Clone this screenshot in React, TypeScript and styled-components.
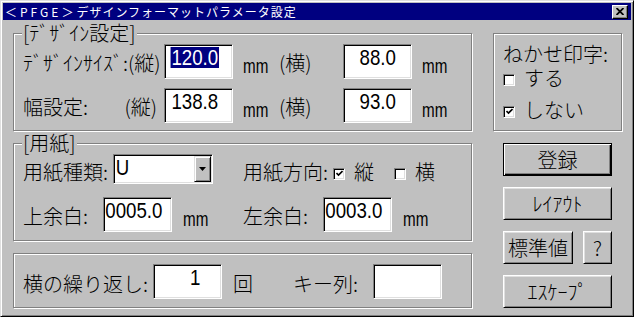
import React from 'react';
import styled, { createGlobalStyle } from 'styled-components';

const GlobalStyle = createGlobalStyle`
  html, body {
    margin: 0;
    padding: 0;
    background: #c0c0c0;
  }
  body {
    width: 634px;
    height: 317px;
    overflow: hidden;
    font-family: "Noto Sans CJK JP", sans-serif;
  }
`;

const Window = styled.div`
  box-sizing: border-box;
  width: 634px;
  height: 317px;
  background: #c0c0c0;
  border: 1px solid;
  border-color: #dfdfdf #000 #000 #dfdfdf;
  box-shadow: inset 1px 1px 0 #fff, inset -1px -1px 0 #808080;
  padding: 2px;
  display: flex;
  flex-direction: column;
`;

const TitleBar = styled.div`
  height: 17px;
  background: #000080;
  display: flex;
  align-items: center;
  justify-content: space-between;
  padding: 0 3px 0 2px;
`;

const Title = styled.span`
  color: #fff;
  font-size: 12px;
  line-height: 17px;
  letter-spacing: 1px;
  white-space: nowrap;
`;

const Brand = styled.span`
  letter-spacing: 3px;
`;

const CloseButton = styled.div`
  box-sizing: border-box;
  width: 16px;
  height: 14px;
  background: #c0c0c0;
  border: 1px solid;
  border-color: #fff #000 #000 #fff;
  box-shadow: inset -1px -1px 0 #808080;
  display: flex;
  align-items: center;
  justify-content: center;
`;

const Body = styled.div`
  display: flex;
  padding: 13px 0 0 10px;
`;

const LeftColumn = styled.div`
  width: 459px;
  display: flex;
  flex-direction: column;
  gap: 12px;
`;

const RightColumn = styled.div`
  width: 129px;
  margin-left: 21px;
  display: flex;
  flex-direction: column;
`;

const Group = styled.div<{ $height: number; $padTop?: number }>`
  box-sizing: border-box;
  height: ${p => p.$height}px;
  border: 1px solid #808080;
  box-shadow: 1px 1px 0 #fff, inset 1px 1px 0 #fff;
  padding: ${p => p.$padTop ?? 0}px 9px 0 9px;
  display: flex;
  flex-direction: column;
`;

const Legend = styled.div`
  align-self: flex-start;
  margin: -11px 0 0 -1px;
  padding: 0 1px;
  background: #c0c0c0;
  font-size: 20px;
  line-height: 20px;
  font-weight: 300;
  white-space: nowrap;
`;

const Row = styled.div<{ $height?: number; $top?: number }>`
  display: flex;
  align-items: flex-start;
  height: ${p => p.$height ?? 35}px;
  margin-top: ${p => p.$top ?? 0}px;
`;

const GridRow = styled.div<{ $top?: number }>`
  display: grid;
  grid-template-columns: 141px 69px 46px 64px 69px auto;
  align-items: start;
  height: 35px;
  margin-top: ${p => p.$top ?? 0}px;
`;

const Half = styled.div<{ $width?: number }>`
  display: flex;
  align-items: flex-start;
  width: ${p => (p.$width ? `${p.$width}px` : 'auto')};
  height: 100%;
`;

const Label = styled.span<{ $width?: number; $top?: number; $left?: number }>`
  display: block;
  flex: none;
  width: ${p => (p.$width ? `${p.$width}px` : 'auto')};
  margin-top: ${p => p.$top ?? 9}px;
  margin-left: ${p => p.$left ?? 0}px;
  font-size: 20px;
  line-height: 20px;
  font-weight: 300;
  color: #000;
  white-space: nowrap;
`;

const SplitLabel = styled.div`
  display: flex;
  justify-content: space-between;
  padding-right: 7px;
  margin-top: 9px;
  font-size: 20px;
  line-height: 20px;
  font-weight: 300;
  white-space: nowrap;
`;

const Unit = styled.span<{ $left?: number }>`
  display: block;
  flex: none;
  margin: 12px 0 0 ${p => p.$left ?? 10}px;
  font-family: "Liberation Sans", sans-serif;
  font-size: 20px;
  line-height: 20px;
  color: #000;
  transform: scaleX(0.76);
  transform-origin: left center;
`;

const Field = styled.div<{ $pad?: number }>`
  box-sizing: border-box;
  flex: none;
  width: 69px;
  height: 35px;
  background: #fff;
  border: 1px solid;
  border-color: #808080 #fff #fff #808080;
  box-shadow: inset 1px 1px 0 #000, inset -1px -1px 0 #dfdfdf;
  padding: 2px ${p => p.$pad ?? 13}px 0 0;
  display: flex;
  justify-content: flex-end;
  align-items: flex-start;
  font-family: "Liberation Sans", sans-serif;
  font-size: 22px;
  line-height: 22px;
  color: #000;
  white-space: nowrap;
`;

const Digits = styled.span<{ $selected?: boolean }>`
  display: block;
  flex: none;
  transform: scaleX(0.85);
  transform-origin: right center;
  line-height: 21px;
  padding: 0 1px;
  background: ${p => (p.$selected ? '#000080' : 'transparent')};
  color: ${p => (p.$selected ? '#fff' : '#000')};
`;

const Combo = styled.div`
  box-sizing: border-box;
  flex: none;
  width: 100px;
  height: 30px;
  margin-top: 1px;
  background: #fff;
  border: 1px solid;
  border-color: #808080 #fff #fff #808080;
  box-shadow: inset 1px 1px 0 #000, inset -1px -1px 0 #dfdfdf;
  padding: 1px;
  display: flex;
  justify-content: space-between;
  font-family: "Liberation Sans", sans-serif;
  font-size: 22px;
  line-height: 22px;
`;

const ComboValue = styled.span`
  display: inline-block;
  padding: 1px 0 0 1px;
  transform: scaleX(0.85);
  transform-origin: left center;
`;

const DropButton = styled.div`
  box-sizing: border-box;
  width: 17px;
  height: 100%;
  background: #c0c0c0;
  border: 1px solid;
  border-color: #dfdfdf #000 #000 #dfdfdf;
  box-shadow: inset 1px 1px 0 #fff, inset -1px -1px 0 #808080;
  display: flex;
  align-items: center;
  justify-content: center;
`;

const Option = styled.div<{ $left?: number; $top?: number }>`
  display: flex;
  align-items: center;
  gap: 9px;
  margin: ${p => p.$top ?? 9}px 0 0 ${p => p.$left ?? 0}px;
  font-size: 20px;
  line-height: 20px;
  font-weight: 300;
  white-space: nowrap;
`;

const CheckBox = styled.span`
  box-sizing: border-box;
  flex: none;
  width: 12px;
  height: 12px;
  margin-top: 3px;
  background: #fff;
  border: 1px solid;
  border-color: #808080 #fff #fff #808080;
  box-shadow: inset 1px 1px 0 #000, inset -1px -1px 0 #dfdfdf;
  display: flex;
  align-items: center;
  justify-content: center;
`;

const Heading = styled.div`
  margin-top: 10px;
  font-size: 20px;
  line-height: 20px;
  font-weight: 300;
  white-space: nowrap;
`;

const ButtonStack = styled.div`
  display: flex;
  flex-direction: column;
  gap: 11px;
  margin-top: 12px;
  padding-left: 10px;
`;

const ButtonRow = styled.div`
  display: flex;
  gap: 10px;
`;

const Button = styled.div<{ $width?: number; $default?: boolean }>`
  box-sizing: border-box;
  width: ${p => p.$width ?? 109}px;
  height: 33px;
  background: #c0c0c0;
  border: 1px solid;
  border-color: ${p => (p.$default ? '#000' : '#fff #000 #000 #fff')};
  box-shadow: ${p =>
    p.$default
      ? 'inset 1px 1px 0 #fff, inset -1px -1px 0 #000, inset -2px -2px 0 #808080'
      : 'inset 1px 1px 0 #dfdfdf, inset -1px -1px 0 #808080'};
  display: flex;
  align-items: center;
  justify-content: center;
  font-size: 20px;
  line-height: 20px;
  font-weight: 300;
  color: #000;
  white-space: nowrap;
`;

const Check = ({ checked }: { checked?: boolean }) => (
  <CheckBox>
    {checked && (
      <svg width="7" height="7" viewBox="0 0 7 7">
        <path d="M0.5 3 L2.5 5 L6.5 1" stroke="#000" strokeWidth="1.6" fill="none" />
      </svg>
    )}
  </CheckBox>
);

const App: React.FC = () => (
  <>
    <GlobalStyle />
    <Window>
      <TitleBar>
        <Title>
          <Brand>＜PFGE＞</Brand>デザインフォーマットパラメータ設定
        </Title>
        <CloseButton>
          <svg width="8" height="7" viewBox="0 0 8 7">
            <path d="M0.5 0 L7.5 7 M7.5 0 L0.5 7" stroke="#000" strokeWidth="1.8" />
          </svg>
        </CloseButton>
      </TitleBar>
      <Body>
        <LeftColumn>
          <Group $height={98}>
            <Legend>[ﾃﾞｻﾞｲﾝ設定]</Legend>
            <GridRow $top={1}>
              <SplitLabel>
                <span>ﾃﾞｻﾞｲﾝｻｲｽﾞ:</span>
                <span>(縦)</span>
              </SplitLabel>
              <Field>
                <Digits $selected>120.0</Digits>
              </Field>
              <Unit>mm</Unit>
              <Label>(横)</Label>
              <Field $pad={14}>
                <Digits>88.0</Digits>
              </Field>
              <Unit>mm</Unit>
            </GridRow>
            <GridRow $top={9}>
              <SplitLabel>
                <span>幅設定:</span>
                <span>(縦)</span>
              </SplitLabel>
              <Field>
                <Digits>138.8</Digits>
              </Field>
              <Unit>mm</Unit>
              <Label>(横)</Label>
              <Field $pad={14}>
                <Digits>93.0</Digits>
              </Field>
              <Unit>mm</Unit>
            </GridRow>
          </Group>

          <Group $height={98}>
            <Legend>[用紙]</Legend>
            <Row $height={31}>
              <Half $width={220}>
                <Label $width={90} $top={9}>用紙種類:</Label>
                <Combo>
                  <ComboValue>U</ComboValue>
                  <DropButton>
                    <svg width="7" height="4" viewBox="0 0 7 4">
                      <polygon points="0,0 7,0 3.5,4" fill="#000" />
                    </svg>
                  </DropButton>
                </Combo>
              </Half>
              <Half>
                <Label $width={90} $top={9}>用紙方向:</Label>
                <Option>
                  <Check checked />
                  <span>縦</span>
                </Option>
                <Option $left={20}>
                  <Check />
                  <span>横</span>
                </Option>
              </Half>
            </Row>
            <Row $top={13}>
              <Half $width={220}>
                <Label $width={80}>上余白:</Label>
                <Field $pad={8}>
                  <Digits>0005.0</Digits>
                </Field>
                <Unit $left={11}>mm</Unit>
              </Half>
              <Half>
                <Label $width={80}>左余白:</Label>
                <Field $pad={8}>
                  <Digits>0003.0</Digits>
                </Field>
                <Unit $left={11}>mm</Unit>
              </Half>
            </Row>
          </Group>

          <Group $height={55} $padTop={10}>
            <Row>
              <Label $width={130} $top={10}>横の繰り返し:</Label>
              <Field $pad={20}>
                <Digits>1</Digits>
              </Field>
              <Label $left={11} $top={10}>回</Label>
              <Label $left={40} $width={80} $top={10}>キー列:</Label>
              <Field />
            </Row>
          </Group>
        </LeftColumn>

        <RightColumn>
          <Group $height={98}>
            <Heading>ねかせ印字:</Heading>
            <Option $top={4}>
              <Check />
              <span>する</span>
            </Option>
            <Option $top={12}>
              <Check checked />
              <span>しない</span>
            </Option>
          </Group>
          <ButtonStack>
            <Button $default>登録</Button>
            <Button>ﾚｲｱｳﾄ</Button>
            <ButtonRow>
              <Button $width={70}>標準値</Button>
              <Button $width={29}>?</Button>
            </ButtonRow>
            <Button>ｴｽｹｰﾌﾟ</Button>
          </ButtonStack>
        </RightColumn>
      </Body>
    </Window>
  </>
);

export default App;
